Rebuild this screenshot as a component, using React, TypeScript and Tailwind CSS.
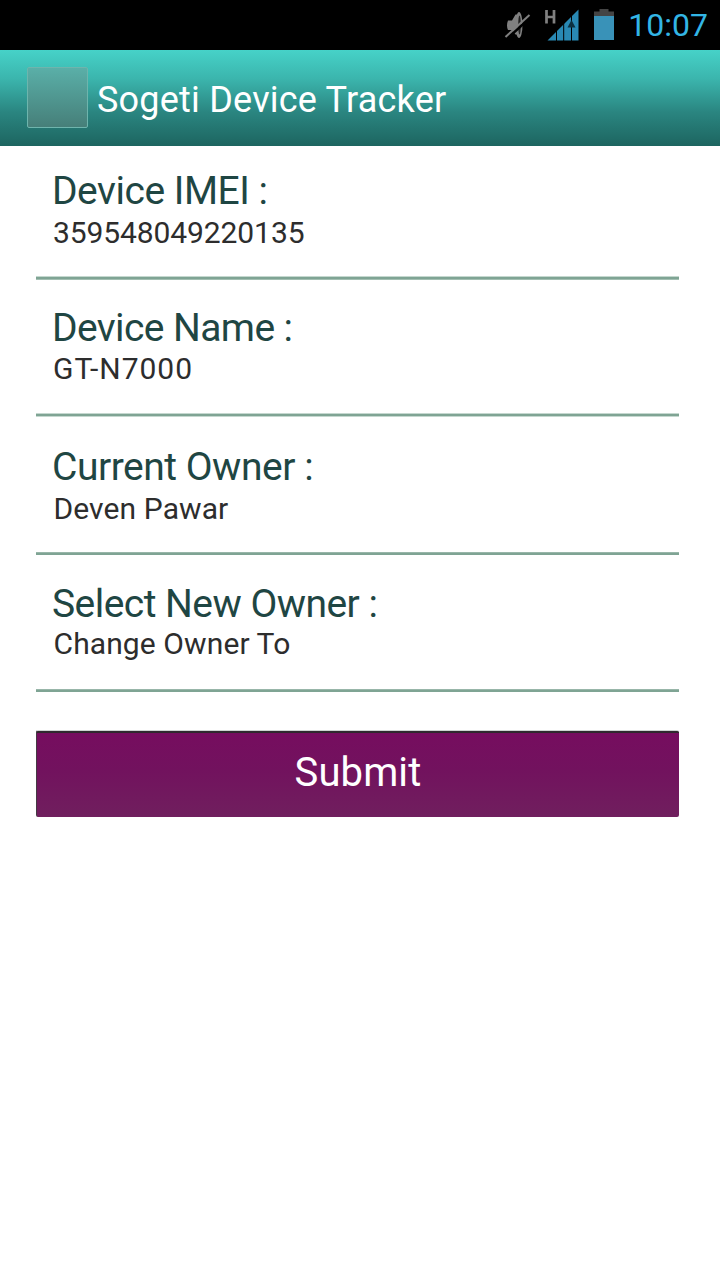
import React from "react";

interface Field {
  label: string;
  value: string;
  row: string;
  labelClass: string;
  valueClass: string;
  line: string;
}

const fields: Field[] = [
  {
    label: "Device IMEI :",
    value: "359548049220135",
    row: "h-[134px] pt-[21px]",
    labelClass: "tracking-[-0.48px]",
    valueClass: "pl-[17px] tracking-[-0.1px]",
    line: "h-1 bg-[linear-gradient(#c5d8cf_1px,#7fa494_1px_3px,#a3bfb2_3px)]",
  },
  {
    label: "Device Name :",
    value: "GT-N7000",
    row: "h-[137px] pt-6",
    labelClass: "tracking-[-0.6px]",
    valueClass: "-mt-px pl-[17px] tracking-[1px]",
    line: "h-1 bg-[linear-gradient(#c5d8cf_1px,#7fa494_1px_3px,#c5d8cf_3px)]",
  },
  {
    label: "Current Owner :",
    value: "Deven Pawar",
    row: "h-[138px] pt-[26px]",
    labelClass: "tracking-[-0.48px]",
    valueClass: "pl-[17.5px] tracking-[0.1px]",
    line: "h-[3px] bg-[linear-gradient(#98b6a9_1px,#7fa494_1px)]",
  },
  {
    label: "Select New Owner :",
    value: "Change Owner To",
    row: "h-[137px] pt-[25px]",
    labelClass: "tracking-[-0.54px]",
    valueClass: "-mt-[2px] pl-[17.5px] tracking-[0.1px]",
    line: "h-[3px] bg-[linear-gradient(#98b6a9_1px,#7fa494_1px)]",
  },
];

function StatusBar() {
  return (
    <div className="flex h-[50px] items-center justify-end bg-black pr-3">
      <svg width="120" height="50" viewBox="500 0 120 50" className="shrink-0">
        <path d="M508 20.500h4l3.500-6h2v20h-2l-3.500-4.500h-4q-2-4.500 0-9.500z" fill="#808080" />
        <ellipse cx="519" cy="25" rx="3.500" ry="13" fill="#808080" />
        <ellipse cx="519.500" cy="25" rx="1.300" ry="9.500" fill="#202020" />
        <path d="M505.500 40L531 17" stroke="#000" strokeWidth="2.500" />
        <path d="M505.500 37L529.500 15" stroke="#808080" strokeWidth="2" />
        <path d="M546.500 10v13.500M554 10v13.500M546 17h8" stroke="#808080" strokeWidth="2.700" fill="none" />
        <path d="M547.500 40.500L578.500 9.500V40.500z" fill="#2989b4" />
        <path d="M556.500 10v31M563.700 10v31M571.500 10v31" stroke="#000" strokeWidth="1" />
        <path d="M571.500 20l4 7.500h-8z" fill="#0c3040" />
        <path d="M594 16v-4.500h5.500V9h9v2.500h5.500V16z" fill="#444" />
        <path d="M594 16h20v24h-20z" fill="#3992b8" />
      </svg>
      <span className="ml-2 text-[32px] leading-[50px] text-[#33b5e5]">10:07</span>
    </div>
  );
}

export default function App() {
  return (
    <div className="min-h-[1280px] w-[720px] bg-white font-['Roboto',sans-serif]">
      <StatusBar />
      <header className="flex h-24 items-start bg-[linear-gradient(#46d2c8,#3bb5ad_30%,#2a8580_65%,#1d6560)] pt-[17px] pl-[27px]">
        <div className="h-[61px] w-[61px] rounded-[2px] border border-[#6eb5ad] bg-[linear-gradient(#5aafa8,#467f79)]" />
        <h1 className="mt-[9px] ml-[9px] text-[36px] leading-[48px] tracking-[0.22px] whitespace-nowrap text-white">Sogeti Device Tracker</h1>
      </header>
      <main className="pr-[41px] pl-9">
        {fields.map((f) => (
          <section key={f.label} className={`flex flex-col ${f.row}`}>
            <h2 className={`pl-4 text-[39px] leading-[48px] whitespace-nowrap text-[#1f4643] ${f.labelClass}`}>{f.label}</h2>
            <p className={`text-[30px] leading-9 whitespace-nowrap text-[#2d2d2d] ${f.valueClass}`}>{f.value}</p>
            <div className={`mt-auto ${f.line}`} />
          </section>
        ))}
        <button className="mt-[38px] block h-[87px] w-full rounded-[2px] border-t border-l border-t-[#cfd6d2] border-l-[#443a43] bg-[linear-gradient(#30292f_2px,#760d5f_2px,#72125e_45%,#701f5e)] pb-[3px] text-[40px] tracking-[0.1px] text-white">
          Submit
        </button>
      </main>
    </div>
  );
}
